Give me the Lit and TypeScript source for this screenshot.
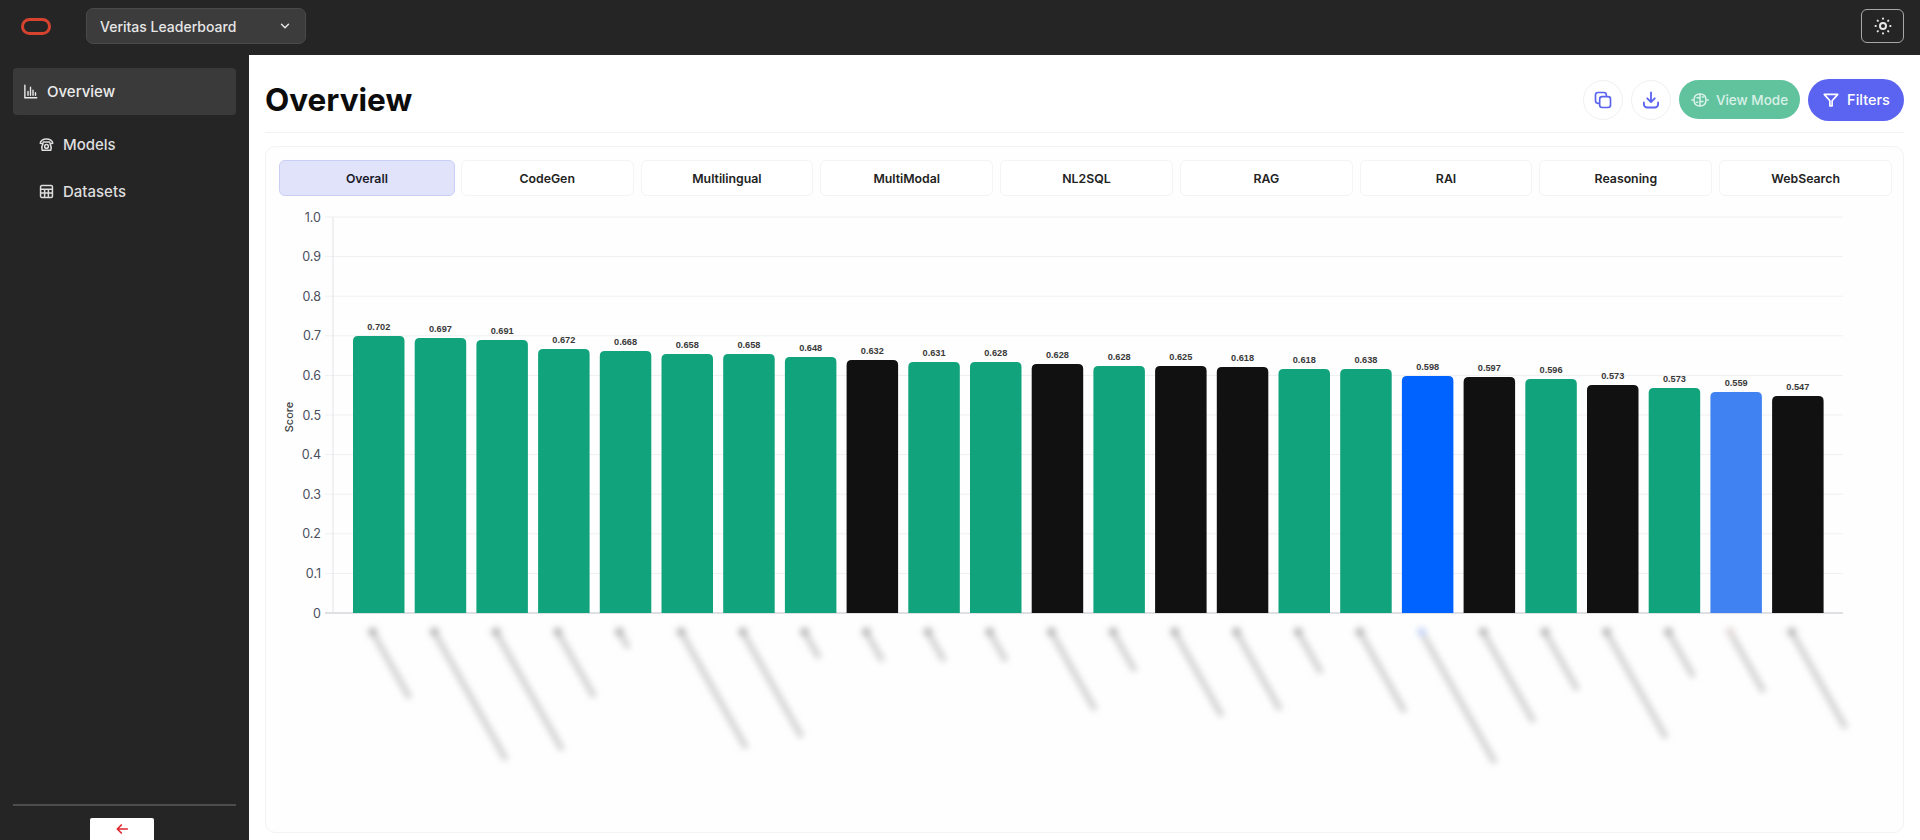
import { LitElement, html, css, svg } from 'lit';
import { customElement, state } from 'lit/decorators.js';

const GREEN = '#10a37c';
const BLACK = '#111111';
const BLUE = '#0062ff';
const SKY = '#4082f2';

// top = measured y of the bar top on the page, end = y where the rotated label stops
const BARS = [
  { value: '0.702', top: 336, end: 698, color: GREEN },
  { value: '0.697', top: 338, end: 760, color: GREEN },
  { value: '0.691', top: 340, end: 750, color: GREEN },
  { value: '0.672', top: 349, end: 697, color: GREEN },
  { value: '0.668', top: 351, end: 648, color: GREEN },
  { value: '0.658', top: 354, end: 748, color: GREEN },
  { value: '0.658', top: 354, end: 737, color: GREEN },
  { value: '0.648', top: 357, end: 658, color: GREEN },
  { value: '0.632', top: 360, end: 661, color: BLACK },
  { value: '0.631', top: 362, end: 661, color: GREEN },
  { value: '0.628', top: 362, end: 661, color: GREEN },
  { value: '0.628', top: 364, end: 710, color: BLACK },
  { value: '0.628', top: 366, end: 671, color: GREEN },
  { value: '0.625', top: 366, end: 716, color: BLACK },
  { value: '0.618', top: 367, end: 710, color: BLACK },
  { value: '0.618', top: 369, end: 673, color: GREEN },
  { value: '0.638', top: 369, end: 712, color: GREEN },
  { value: '0.598', top: 376, end: 763, color: BLUE },
  { value: '0.597', top: 377, end: 722, color: BLACK },
  { value: '0.596', top: 379, end: 690, color: GREEN },
  { value: '0.573', top: 385, end: 738, color: BLACK },
  { value: '0.573', top: 388, end: 677, color: GREEN },
  { value: '0.559', top: 392, end: 692, color: SKY },
  { value: '0.547', top: 396, end: 728, color: BLACK },
];

const TABS = ['Overall', 'CodeGen', 'Multilingual', 'MultiModal', 'NL2SQL', 'RAG', 'RAI', 'Reasoning', 'WebSearch'];
const TICKS = ['1.0', '0.9', '0.8', '0.7', '0.6', '0.5', '0.4', '0.3', '0.2', '0.1', '0'];

// page position of the chart svg, bar data above is in page coordinates
const CHART_X = 279;
const CHART_Y = 204;
const PLOT_LEFT = 54;
const PLOT_RIGHT = 1564;
const PLOT_TOP = 13;
const PLOT_BOTTOM = 409;

@customElement('app-root')
export class AppRoot extends LitElement {
  @state() activeTab = 'Overall';

  static styles = css`
    :host {
      display: block;
      height: 840px;
      overflow: hidden;
      background: #252525;
      font-family: Inter, 'Liberation Sans', sans-serif;
    }
    .topbar {
      display: flex;
      align-items: center;
      height: 55px;
      padding: 0 16px 3px 21px;
      box-sizing: border-box;
    }
    .logo {
      width: 30px;
      height: 17px;
      margin-right: 35px;
      box-sizing: border-box;
      border: 3px solid #d8432f;
      border-radius: 9px;
    }
    .select {
      display: flex;
      align-items: center;
      justify-content: space-between;
      width: 220px;
      height: 36px;
      padding: 0 13px;
      box-sizing: border-box;
      background: #3c3c3c;
      border: 1px solid #4a4a4a;
      border-radius: 7px;
      color: #e6e6e6;
      font-size: 14px;
      font-weight: 500;
    }
    .theme {
      display: flex;
      align-items: center;
      justify-content: center;
      width: 43px;
      height: 34px;
      margin-left: auto;
      box-sizing: border-box;
      border: 1px solid #a8a8a8;
      border-radius: 6px;
      color: #e8e8e8;
    }
    .body {
      display: flex;
      height: 785px;
    }
    .sidebar {
      display: flex;
      flex-direction: column;
      width: 249px;
      flex: none;
      padding: 13px 13px 0;
      box-sizing: border-box;
    }
    .nav {
      display: flex;
      align-items: center;
      gap: 9px;
      height: 47px;
      color: #dedede;
      font-size: 15px;
      font-weight: 500;
      border-radius: 4px;
    }
    .nav.active {
      background: #3a3a3a;
      padding-left: 10px;
      margin-bottom: 6px;
      color: #ececec;
    }
    .nav.sub {
      padding-left: 26px;
    }
    .collapse {
      margin-top: auto;
      border-top: 2px solid #4d4d4d;
      padding: 12px 6px 0 0;
      display: flex;
      justify-content: center;
    }
    .collapse button {
      display: flex;
      align-items: center;
      justify-content: center;
      width: 64px;
      height: 22px;
      padding: 0;
      background: #fff;
      border: none;
      border-radius: 2px 2px 0 0;
      color: #e0262c;
    }
    .main {
      flex: 1;
      min-width: 0;
      background: #fff;
      padding: 0 16px;
    }
    .header {
      display: flex;
      align-items: center;
      justify-content: space-between;
      height: 78px;
      padding-top: 12px;
      box-sizing: border-box;
      border-bottom: 1px solid #f1f2f4;
    }
    h1 {
      margin: 0;
      font-size: 31.5px;
      font-weight: 700;
      color: #0c0c0c;
    }
    .actions {
      display: flex;
      align-items: center;
      gap: 8px;
    }
    .round {
      display: flex;
      align-items: center;
      justify-content: center;
      width: 40px;
      height: 40px;
      box-sizing: border-box;
      border: 1px solid #eff0f4;
      border-radius: 50%;
      background: #fff;
      color: #5a64ee;
    }
    .pill {
      display: flex;
      align-items: center;
      justify-content: center;
      border-radius: 21px;
      color: #fff;
      font-weight: 500;
    }
    .pill.view {
      width: 121px;
      height: 39px;
      gap: 7px;
      background: #61c39e;
      font-size: 13.5px;
      color: #d9f1e7;
    }
    .pill.filters {
      width: 96px;
      height: 42px;
      gap: 7px;
      background: #5b63f1;
      font-size: 14.5px;
    }
    .card {
      height: 687px;
      margin-top: 13px;
      padding: 13px 11px 0 13px;
      box-sizing: border-box;
      background: #fefefe;
      border: 1px solid #f2f3f5;
      border-radius: 10px;
    }
    .tabs {
      display: grid;
      grid-template-columns: repeat(9, 1fr);
      gap: 7px;
      height: 36px;
      margin-left: 2px;
    }
    .tab {
      display: flex;
      align-items: center;
      justify-content: center;
      box-sizing: border-box;
      background: #fff;
      border: 1px solid #f3f4f6;
      border-radius: 6px;
      color: #222;
      font-size: 12.3px;
      font-weight: 600;
    }
    .tab.active {
      margin: 0 -1px 0 -2px;
      background: #e0e3fa;
      border-color: #c9cef5;
      color: #1b1b2a;
    }
    .chart {
      display: block;
      margin-top: 8px;
    }
    .tick {
      font-size: 12.5px;
      fill: #4a4f5c;
      text-anchor: end;
    }
    .axis-title {
      font-size: 11px;
      font-weight: 500;
      fill: #444;
      text-anchor: middle;
    }
    .value {
      font-family: 'Liberation Sans', sans-serif;
      font-size: 9.2px;
      font-weight: 700;
      fill: #3a3a3a;
      text-anchor: middle;
    }
  `;

  renderChart() {
    const step = (PLOT_BOTTOM - PLOT_TOP) / 10;
    return html`
      <svg class="chart" width="1613" height="600" viewBox="0 0 1613 600">
        <defs>
          <filter id="soft" x="-40%" y="-40%" width="180%" height="180%">
            <feGaussianBlur stdDeviation="3"></feGaussianBlur>
          </filter>
        </defs>
        ${TICKS.map((t, i) => {
          const y = PLOT_TOP + i * step;
          return svg`
            <line x1=${PLOT_LEFT - 8} x2=${PLOT_RIGHT} y1=${y} y2=${y}
              stroke=${i === 10 ? '#d4d6da' : '#eff0f2'} stroke-width=${i === 10 ? 1.5 : 1}></line>
            <text class="tick" x=${PLOT_LEFT - 12} y=${y + 4.5}>${t}</text>
          `;
        })}
        <line x1=${PLOT_LEFT} x2=${PLOT_LEFT} y1=${PLOT_TOP} y2=${PLOT_BOTTOM} stroke="#e2e3e7"></line>
        <text class="axis-title" transform="translate(14 213) rotate(-90)">Score</text>
        ${BARS.map((b, i) => this.renderBar(b, i))}
      </svg>
    `;
  }

  renderBar(b: (typeof BARS)[number], i: number) {
    const x = 353 + i * 61.7 - CHART_X;
    const w = 51.5;
    const top = b.top - CHART_Y;
    const h = PLOT_BOTTOM - top;
    const cx = x + w / 2;
    // labels are unreadable smudges in the source, slope is about 0.56 x per y
    const y1 = 632 - CHART_Y;
    const y2 = b.end - CHART_Y;
    const x1 = cx - 6;
    const x2 = x1 + (y2 - y1) * 0.56;
    const dot = b.color === BLUE ? '#c5d4f5' : b.color === SKY ? '#e0d8d6' : '#b8b8b8';
    return svg`
      <path fill=${b.color}
        d="M${x} ${top + 5}q0-5 5-5h${w - 10}q5 0 5 5v${h - 5}H${x}Z"></path>
      <text class="value" x=${cx} y=${top - 6}>${b.value}</text>
      <g filter="url(#soft)">
        <circle cx=${x1} cy=${y1} r="4.5" fill=${dot}></circle>
        <line x1=${x1 + 2} y1=${y1 + 4} x2=${x2} y2=${y2} stroke="#d2d2d2" stroke-width="6"></line>
      </g>
    `;
  }

  render() {
    return html`
      <div class="topbar">
        <div class="logo"></div>
        <div class="select">
          Veritas Leaderboard
          <svg width="14" height="14" viewBox="0 0 24 24" fill="none" stroke="currentColor" stroke-width="2.5" stroke-linecap="round" stroke-linejoin="round"><path d="m6 9 6 6 6-6"/></svg>
        </div>
        <div class="theme">
          <svg width="20" height="20" viewBox="0 0 24 24" fill="none" stroke="currentColor" stroke-width="2.4" stroke-linecap="round"><circle cx="12" cy="12" r="3.6"/><path d="M12 3v.4M12 20.6v.4M5.6 5.6l.3.3M18.1 18.1l.3.3M3 12h.4M20.6 12h.4M5.6 18.4l.3-.3M18.1 5.9l.3-.3"/></svg>
        </div>
      </div>
      <div class="body">
        <aside class="sidebar">
          <div class="nav active">
            <svg width="15" height="15" viewBox="0 0 24 24" fill="none" stroke="currentColor" stroke-width="2.2" stroke-linecap="round"><path d="M3 2v20h19M8 18v-6M12 18V5M16 18v-8M20 18v-4"/></svg>
            Overview
          </div>
          <div class="nav sub">
            <svg width="15" height="15" viewBox="0 0 24 24" fill="none" stroke="currentColor" stroke-width="2.4" stroke-linecap="round" stroke-linejoin="round"><path d="M2 10c0-4 5-7 10-7s10 3 10 7l-4 1-1-3H7l-1 3Z"/><path d="M6 12c-2 3-2 6-1 9h14c1-3 1-6-1-9"/><circle cx="12" cy="15" r="3"/></svg>
            Models
          </div>
          <div class="nav sub">
            <svg width="15" height="15" viewBox="0 0 24 24" fill="none" stroke="currentColor" stroke-width="2.4"><rect x="2.5" y="2.5" width="19" height="19" rx="2"/><path d="M2.5 8.5h19M2.5 14.5h19M9 8.5v13M15 8.5v13"/></svg>
            Datasets
          </div>
          <div class="collapse">
            <button aria-label="Collapse">
              <svg width="16" height="16" viewBox="0 0 24 24" fill="none" stroke="currentColor" stroke-width="2.5" stroke-linecap="round" stroke-linejoin="round"><path d="M20 12H5M11 6l-6 6 6 6"/></svg>
            </button>
          </div>
        </aside>
        <main class="main">
          <div class="header">
            <h1>Overview</h1>
            <div class="actions">
              <div class="round">
                <svg width="20" height="20" viewBox="0 0 24 24" fill="none" stroke="currentColor" stroke-width="2" stroke-linejoin="round"><rect x="8" y="8" width="13" height="13" rx="3"/><path d="M16 8V6a3 3 0 0 0-3-3H6a3 3 0 0 0-3 3v7a3 3 0 0 0 3 3h2"/></svg>
              </div>
              <div class="round">
                <svg width="20" height="20" viewBox="0 0 24 24" fill="none" stroke="currentColor" stroke-width="2.2" stroke-linecap="round" stroke-linejoin="round"><path d="M12 3v11M7.500 10l4.500 4.500 4.500-4.500M3.500 15v2a4 4 0 0 0 4 4h9a4 4 0 0 0 4-4v-2"/></svg>
              </div>
              <div class="pill view">
                <svg width="18" height="18" viewBox="0 0 24 24" fill="none" stroke="currentColor" stroke-width="2" stroke-linecap="round"><path d="M4 12c0-5 3-8 8-8s8 3 8 8-3 8-8 8-8-3-8-8Z"/><path d="M12 4v16M8 9h4M12 14h4M7 15h2M15 8h2M21 12h2M1 12h2"/></svg>
                View Mode
              </div>
              <div class="pill filters">
                <svg width="18" height="18" viewBox="0 0 24 24" fill="none" stroke="currentColor" stroke-width="2.2" stroke-linecap="round" stroke-linejoin="round"><path d="M3 4.500h18l-7.500 8.500v7h-3v-7Z"/></svg>
                Filters
              </div>
            </div>
          </div>
          <section class="card">
            <div class="tabs">
              ${TABS.map(t => html`<div class="tab ${t === this.activeTab ? 'active' : ''}">${t}</div>`)}
            </div>
            ${this.renderChart()}
          </section>
        </main>
      </div>
    `;
  }
}
